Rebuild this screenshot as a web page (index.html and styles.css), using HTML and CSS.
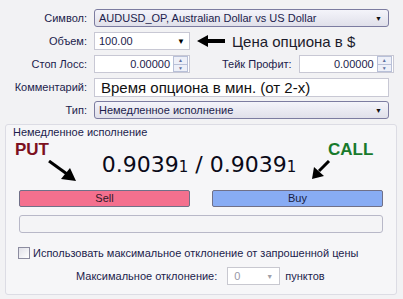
FILE: index.html
```html
<!DOCTYPE html>
<html>
<head>
<meta charset="utf-8">
<link rel="stylesheet" href="styles.css">
</head>
<body>
<div class="form">
  <div class="row">
    <span class="label">Символ:</span>
    <div class="select wide"><span>AUDUSD_OP, Australian Dollar vs US Dollar</span><span class="caret">▼</span></div>
  </div>
  <div class="row">
    <span class="label">Объем:</span>
    <div class="input combo"><span>100.00</span><span class="caret dark">▼</span></div>
    <svg class="larrow" width="28" height="12" viewBox="0 0 28 12"><path d="M0 6 L11 0 L11 4 L28 4 L28 8 L11 8 L11 12 Z" fill="#000"/></svg>
    <span class="note">Цена опциона в $</span>
  </div>
  <div class="row">
    <span class="label">Стоп Лосс:</span>
    <div class="input spin"><span class="num">0.00000</span><span class="spinner"><i>▲</i><i>▼</i></span></div>
    <span class="label2">Тейк Профит:</span>
    <div class="input spin tp"><span class="num">0.00000</span><span class="spinner"><i>▲</i><i>▼</i></span></div>
  </div>
  <div class="row">
    <span class="label">Комментарий:</span>
    <div class="input wide comment">Время опциона в мин. (от 2-х)</div>
  </div>
  <div class="row">
    <span class="label">Тип:</span>
    <div class="select wide"><span>Немедленное исполнение</span><span class="caret">▼</span></div>
  </div>
</div>
<div class="group">
  <div class="gtitle">Немедленное исполнение</div>
  <div class="pricezone">
    <span class="put">PUT</span>
    <span class="call">CALL</span>
    <svg class="parrow" width="30" height="22" viewBox="0 0 30 22"><path d="M1 1 L19 14" stroke="#000" stroke-width="3"/><path d="M28 21 L13 19 L22 8 Z" fill="#000"/></svg>
    <svg class="carrow" width="20" height="20" viewBox="0 0 20 20"><path d="M18 1 L8 11" stroke="#000" stroke-width="3"/><path d="M1 19 L3 7 L13 16 Z" fill="#000"/></svg>
    <div class="price">0.9039<small>1</small> / 0.9039<small>1</small></div>
  </div>
  <div class="buttons">
    <div class="btn sell">Sell</div>
    <div class="btn buy">Buy</div>
  </div>
  <div class="progress"></div>
  <div class="check"><span class="box"></span><span>Использовать максимальное отклонение от запрошенной цены</span></div>
  <div class="dev">
    <span>Максимальное отклонение:</span>
    <div class="dcombo"><span>0</span><span class="caret light">▼</span></div>
    <span>пунктов</span>
  </div>
</div>
</body>
</html>
```
FILE: styles.css
```css
* { box-sizing: border-box; }
body {
  margin: 0;
  width: 403px;
  height: 299px;
  background: #f2f2f4;
  font-family: "Liberation Sans", Arial, sans-serif;
  font-size: 11px;
  color: #1c1c4c;
  overflow: hidden;
}
.form { padding-top: 9px; }
.row {
  display: flex;
  align-items: center;
  height: 18px;
  margin-bottom: 5px;
}
.label {
  width: 88px;
  text-align: right;
  padding-right: 1px;
  margin-right: 6px;
}
.select {
  height: 18px;
  border: 1px solid #7c7ca0;
  border-radius: 3px;
  background: linear-gradient(#f4f4fa, #e0e0ea);
  display: flex;
  align-items: center;
  justify-content: space-between;
  padding: 0 6px 0 4px;
}
.wide { width: 295px; }
.caret { font-size: 7px; color: #111; }
.caret.dark { color: #000; font-size: 8px; }
.caret.light { color: #a0a0a8; }
.input {
  height: 18px;
  border: 1px solid #c8c8d4;
  background: #fff;
  display: flex;
  align-items: center;
  padding: 0 4px;
}
.combo { width: 96px; justify-content: space-between; padding-right: 4px; }
.larrow { margin-left: 7px; }
.note {
  margin-left: 7px;
  font-size: 15px;
  color: #1a1a2a;
}
.spin { width: 96px; padding: 0 1px 0 4px; }
.spin .num { flex: 1; text-align: right; padding-right: 3px; }
.spinner {
  width: 15px;
  height: 16px;
  display: flex;
  flex-direction: column;
  border: 1px solid #b8c0d8;
  background: #eef0f8;
}
.spinner i {
  flex: 1;
  font-style: normal;
  font-size: 5px;
  line-height: 7px;
  text-align: center;
  color: #6070a0;
}
.spinner i + i { border-top: 1px solid #b8c0d8; }
.label2 { margin-left: 32px; margin-right: 7px; }
.tp { width: 95px; }
.comment { font-size: 15px; color: #111; height: 19px; padding-left: 6px; }
.group {
  margin: 4px 6px 0 5px;
  height: 171px;
  border: 1px solid #dcdce4;
  border-radius: 3px;
  background: #f6f6f8;
  padding: 0 13px 0 13px;
}
.gtitle { margin: 1px 0 0 -6px; height: 12px; line-height: 12px; }
.pricezone { position: relative; height: 52px; }
.put, .call {
  position: absolute; top: 3px;
  font-size: 17px; line-height: 1; font-weight: bold;
}
.put { left: -4px; color: #7c1020; }
.call { left: 309px; color: #187a2c; }
.parrow { position: absolute; left: 29px; top: 22px; }
.carrow { position: absolute; left: 292px; top: 22px; }
.price {
  text-align: center;
  font-family: "DejaVu Sans", Verdana, sans-serif;
  font-size: 22px;
  color: #0a0a18;
  padding-top: 14px;
  padding-right: 4px;
}
.price small { font-size: 15px; }
.buttons { display: flex; justify-content: space-between; }
.btn {
  width: 171px;
  height: 17px;
  border: 1px solid #707088;
  border-radius: 2px;
  text-align: center;
  line-height: 15px;
  color: #301828;
}
.sell { background: #f4708e; }
.buy { background: #88acf4; color: #182040; }
.progress {
  margin-top: 8px;
  height: 18px;
  border: 1px solid #b8b8c8;
  border-radius: 3px;
  background: #f4f4f6;
}
.check {
  display: flex; align-items: center;
  margin-top: 14px; margin-left: -1px;
  height: 12px;
}
.box {
  width: 12px; height: 12px;
  border: 1px solid #8c8ca0;
  background: linear-gradient(135deg, #e0e0e8, #fff);
  margin-right: 3px;
}
.dev {
  display: flex; align-items: center;
  margin-top: 8px;
  padding-left: 57px;
  height: 18px;
}
.dcombo {
  width: 53px; height: 18px;
  margin: 0 5px 0 10px;
  border: 1px solid #c8c8d0;
  background: #fff;
  display: flex; align-items: center; justify-content: space-between;
  padding: 0 6px 0 6px;
  color: #9898a8;
}
```
